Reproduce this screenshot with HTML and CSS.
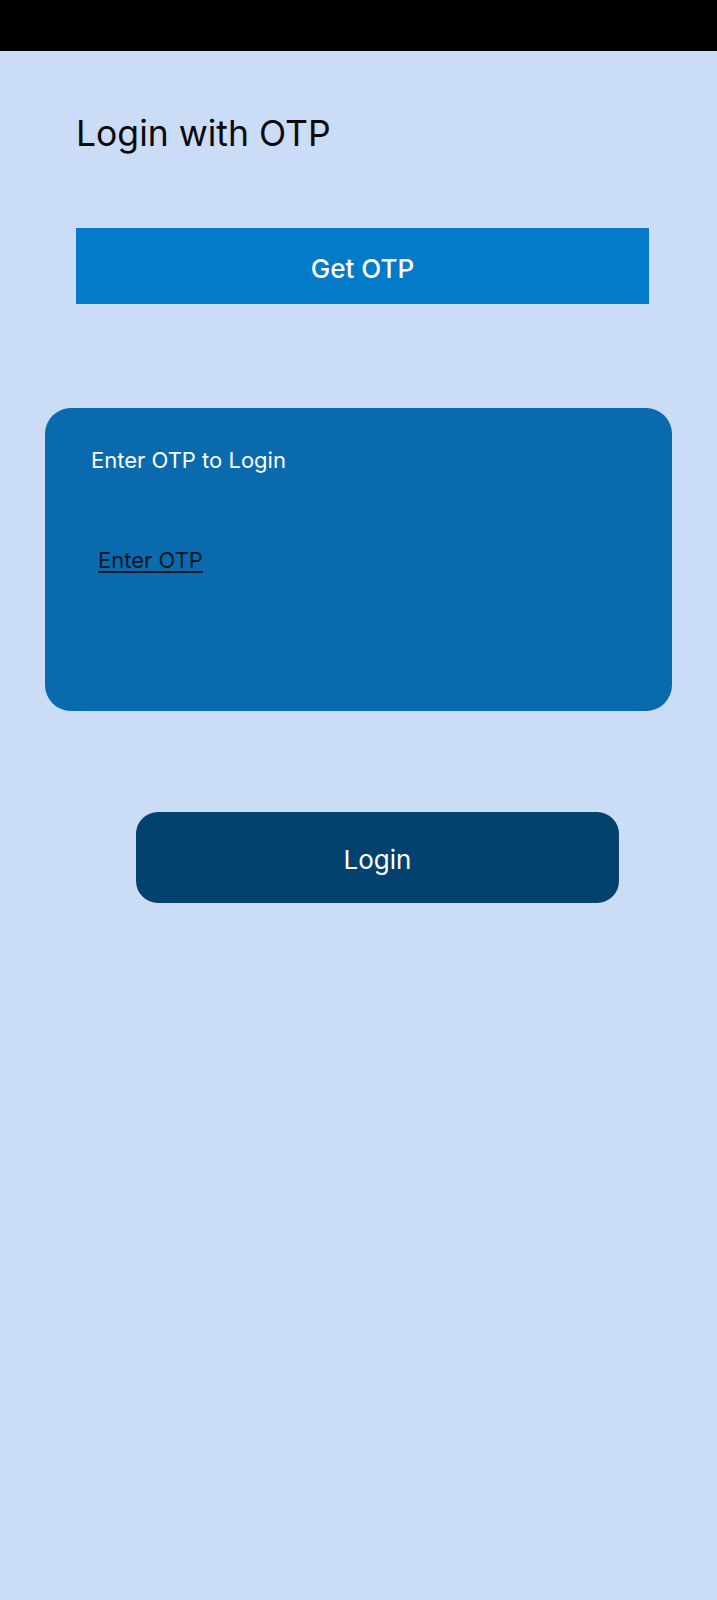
FILE: index.html
```html
<!DOCTYPE html>
<html lang="en">
<head>
<meta charset="utf-8">
<title>Login with OTP</title>
<link rel="stylesheet" href="styles.css">
</head>
<body>
<div class="status-bar"></div>
<main class="page">
  <h1 class="title">Login with OTP</h1>
  <button class="btn-get-otp" type="button">Get OTP</button>
  <section class="otp-card">
    <h2 class="otp-card-title">Enter OTP to Login</h2>
    <span class="otp-input">Enter OTP</span>
  </section>
  <button class="btn-login" type="button">Login</button>
</main>
</body>
</html>
```

FILE: styles.css
```css
html, body {
  margin: 0;
  padding: 0;
}
body {
  width: 717px;
  min-height: 1600px;
  background: #cbdcf6;
  font-family: Inter, "Noto Sans", sans-serif;
  color: #000;
}
.status-bar {
  height: 51px;
  background: #000;
}
.page {
  display: flex;
  flex-direction: column;
  padding: 0 45px;
}
.title {
  margin: 62px 0 0 31px;
  font-size: 35.5px;
  font-weight: 400;
  line-height: 42px;
  color: #0a0a0a;
}
.btn-get-otp {
  margin: 73px 23px 0 31px;
  height: 76px;
  border: none;
  background: #037bc9;
  color: #fff;
  font-family: inherit;
  font-size: 26px;
  font-weight: 500;
  padding: 4px 0 0;
}
.otp-card {
  margin-top: 104px;
  height: 303px;
  box-sizing: border-box;
  background: #0a6aae;
  border-radius: 26px;
  padding: 39px 0 0 46px;
  display: flex;
  flex-direction: column;
  align-items: flex-start;
}
.otp-card-title {
  margin: 0;
  font-size: 22px;
  font-weight: 400;
  line-height: 27px;
  color: #fff;
}
.otp-input {
  margin: 73px 0 0 7px;
  font-size: 22px;
  line-height: 26px;
  color: #0b1522;
  text-decoration: underline;
  text-underline-offset: 3px;
}
.btn-login {
  margin: 101px 53px 0 91px;
  height: 91px;
  border: none;
  border-radius: 22px;
  background: #03426e;
  color: #fff;
  font-family: inherit;
  font-size: 26px;
  padding: 4px 0 0;
}
```
